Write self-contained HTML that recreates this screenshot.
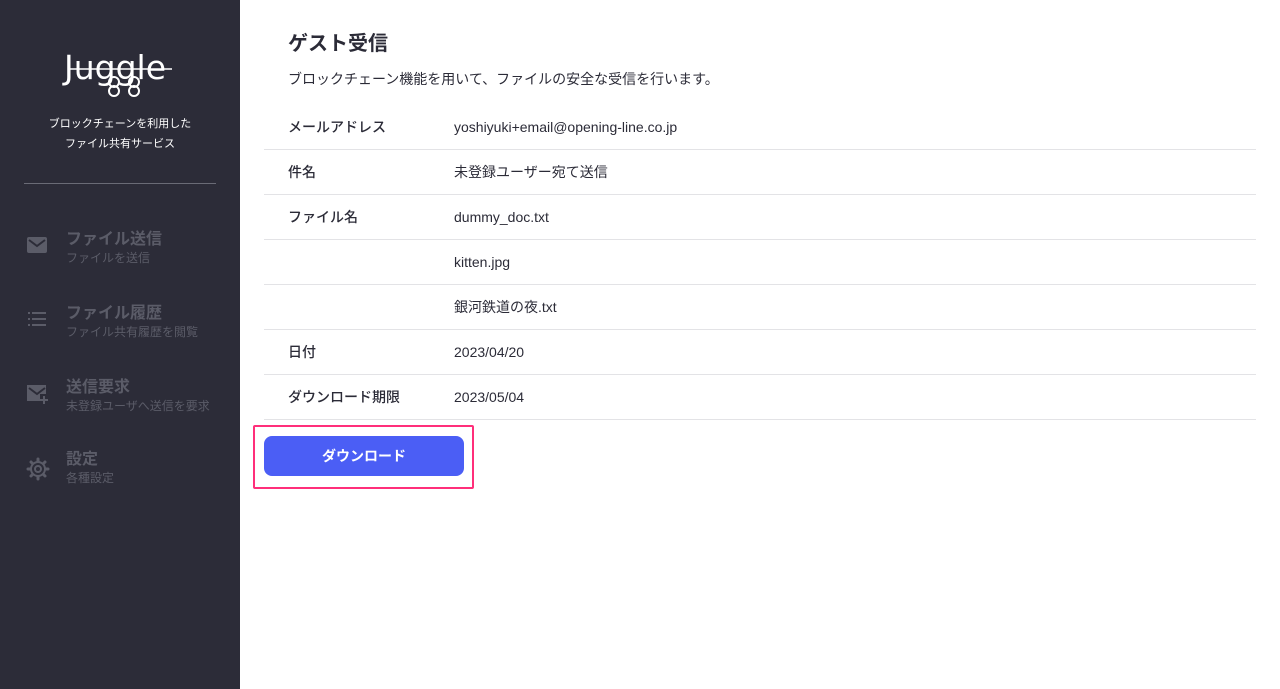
<!DOCTYPE html>
<html><head><meta charset="utf-8"><style>
*{margin:0;padding:0;box-sizing:border-box}
body{width:1280px;height:689px;overflow:hidden;font-family:"Liberation Sans","Noto Sans CJK JP",sans-serif;background:#fff;position:relative;color:#2b2b37}
.sb{position:absolute;left:0;top:0;width:240px;height:689px;background:#2c2c38;color:#fff}
.logo{position:absolute;left:64px;top:48px;font-size:33px;letter-spacing:0px;font-family:"DejaVu Sans",sans-serif}
.tag{position:absolute;left:0;width:240px;text-align:center;font-size:11px;line-height:20px;top:114px}
.hr{position:absolute;left:24px;top:183px;width:192px;height:1px;background:#6a6b76}
.mi{position:absolute;left:26px;color:#5b5c68}
.mi svg{position:absolute;left:0;top:0}
.mi .t{position:absolute;left:40px;top:-12px;font-size:16px;font-weight:bold;white-space:nowrap}
.mi .s{position:absolute;left:40px;top:12px;font-size:12px;white-space:nowrap}
h1{position:absolute;left:288px;top:27px;font-size:20px;font-weight:bold}
.desc{position:absolute;left:288px;top:69px;font-size:14px}
.row{position:absolute;left:264px;width:992px;height:45px;border-bottom:1px solid #e3e3e6;font-size:14px;line-height:44px}
.row .l{position:absolute;left:24px;top:0;font-weight:500}
.row .v{position:absolute;left:190px;top:0}
.out{position:absolute;left:253px;top:425px;width:221px;height:64px;border:2px solid #ff2f7a;border-radius:2px}
.btn{position:absolute;left:264px;top:436px;width:200px;height:40px;background:#4b5ef5;border-radius:8px;color:#fff;font-weight:bold;font-size:14px;text-align:center;line-height:40px}
</style></head><body>
<div class="sb">
<div class="logo">Juggle</div>
<svg style="position:absolute;left:64px;top:60px" width="112" height="40"><line x1="4" y1="9" x2="108" y2="9" stroke="#fff" stroke-width="1.5"/><circle cx="50" cy="22" r="5" fill="none" stroke="#fff" stroke-width="2"/><circle cx="50" cy="31" r="5" fill="none" stroke="#fff" stroke-width="2"/><circle cx="70" cy="22" r="5" fill="none" stroke="#fff" stroke-width="2"/><circle cx="70" cy="31" r="5" fill="none" stroke="#fff" stroke-width="2"/></svg>
<div class="tag">ブロックチェーンを利用した<br>ファイル共有サービス</div>
<div class="hr"></div>
<div class="mi" style="top:237px"><svg width="22" height="18"><rect x="1" y="0" width="20" height="16" rx="2" fill="#5b5c68"/><path d="M3 3l8 6 8-6" stroke="#2c2c38" stroke-width="2" fill="none"/></svg><div class="t">ファイル送信</div><div class="s">ファイルを送信</div></div>
<div class="mi" style="top:311px"><svg width="22" height="18"><g fill="#5b5c68"><rect x="2" y="1" width="2" height="2"/><rect x="6" y="1" width="14" height="2"/><rect x="2" y="7" width="2" height="2"/><rect x="6" y="7" width="14" height="2"/><rect x="2" y="13" width="2" height="2"/><rect x="6" y="13" width="14" height="2"/></g></svg><div class="t">ファイル履歴</div><div class="s">ファイル共有履歴を閲覧</div></div>
<div class="mi" style="top:385px"><svg width="24" height="22"><path d="M1 0h19v9h-6v7H1z" fill="#5b5c68"/><path d="M3 3l8 6 8-6" stroke="#2c2c38" stroke-width="2" fill="none"/><path d="M18 11v8M14 15h8" stroke="#5b5c68" stroke-width="2"/></svg><div class="t">送信要求</div><div class="s">未登録ユーザへ送信を要求</div></div>
<div class="mi" style="top:457px"><svg width="24" height="24"><g stroke="#5b5c68" stroke-width="3" stroke-linecap="round"><line x1="12" y1="2" x2="12" y2="22"/><line x1="2" y1="12" x2="22" y2="12"/><line x1="5" y1="5" x2="19" y2="19"/><line x1="19" y1="5" x2="5" y2="19"/></g><circle cx="12" cy="12" r="7" fill="#2c2c38" stroke="#5b5c68" stroke-width="2"/><circle cx="12" cy="12" r="3" fill="none" stroke="#5b5c68" stroke-width="2"/></svg><div class="t">設定</div><div class="s">各種設定</div></div>
</div>
<h1>ゲスト受信</h1>
<div class="desc">ブロックチェーン機能を用いて、ファイルの安全な受信を行います。</div>
<div class="row" style="top:105px"><span class="l">メールアドレス</span><span class="v">yoshiyuki+email@opening-line.co.jp</span></div>
<div class="row" style="top:150px"><span class="l">件名</span><span class="v">未登録ユーザー宛て送信</span></div>
<div class="row" style="top:195px"><span class="l">ファイル名</span><span class="v">dummy_doc.txt</span></div>
<div class="row" style="top:240px"><span class="v">kitten.jpg</span></div>
<div class="row" style="top:285px"><span class="v">銀河鉄道の夜.txt</span></div>
<div class="row" style="top:330px"><span class="l">日付</span><span class="v">2023/04/20</span></div>
<div class="row" style="top:375px"><span class="l">ダウンロード期限</span><span class="v">2023/05/04</span></div>
<div class="out"></div>
<div class="btn">ダウンロード</div>
</body></html>
